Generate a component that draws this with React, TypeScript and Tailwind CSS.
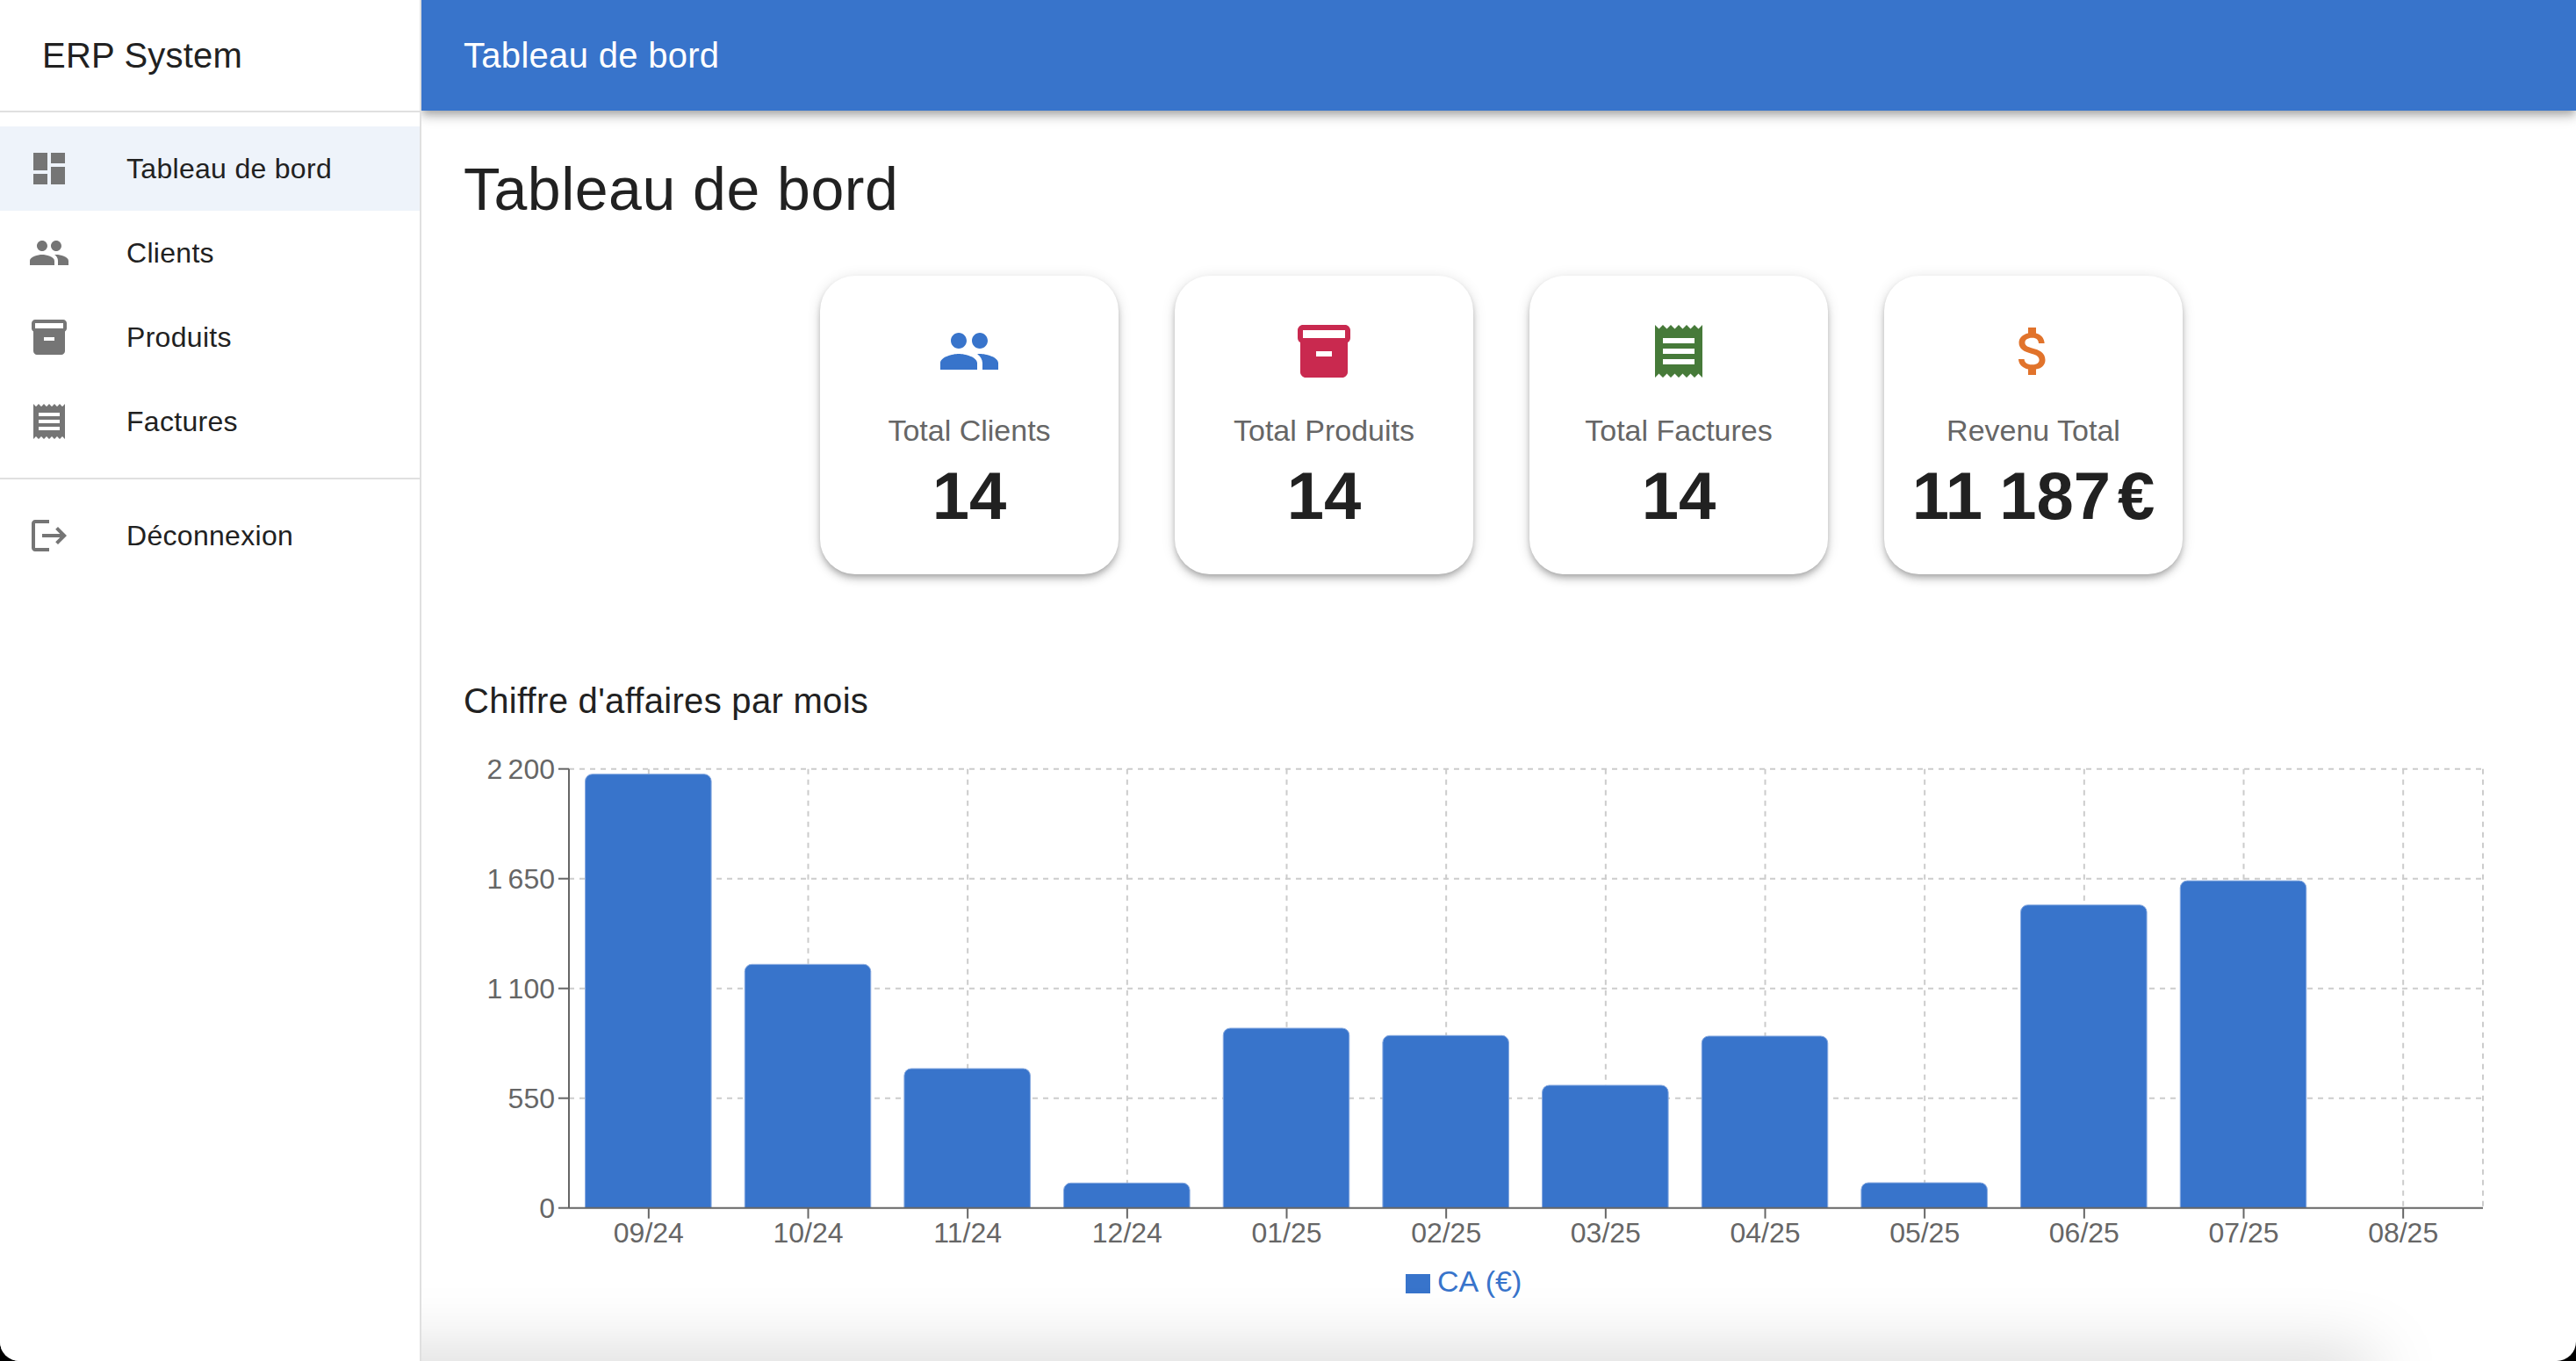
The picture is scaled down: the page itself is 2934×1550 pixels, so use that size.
import { ReactNode } from "react"

const sans = "font-['Liberation_Sans',Arial,sans-serif]"

const icons = {
  dashboard: "M3 13h8V3H3v10zm0 8h8v-6H3v6zm10 0h8V11h-8v10zm0-18v6h8V3h-8z",
  people:
    "M16 11c1.66 0 2.99-1.34 2.99-3S17.66 5 16 5c-1.66 0-3 1.34-3 3s1.34 3 3 3zm-8 0c1.66 0 2.99-1.34 2.99-3S9.66 5 8 5C6.34 5 5 6.34 5 8s1.34 3 3 3zm0 2c-2.33 0-7 1.17-7 3.5V19h14v-2.5c0-2.33-4.67-3.5-7-3.5zm8 0c-.29 0-.62.02-.97.05 1.16.84 1.97 1.97 1.97 3.45V19h6v-2.5c0-2.33-4.67-3.5-7-3.5z",
  inventory:
    "M20 2H4c-1 0-2 .9-2 2v3.01c0 .72.43 1.34 1 1.69V20c0 1.1 1.1 2 2 2h14c.9 0 2-.9 2-2V8.7c.57-.35 1-.97 1-1.69V4c0-1.1-1-2-2-2m-5 12H9v-2h6zm5-7H4V4l16-.01z",
  receipt:
    "M18 17H6v-2h12v2zm0-4H6v-2h12v2zm0-4H6V7h12v2zM3 22l1.5-1.5L6 22l1.5-1.5L9 22l1.5-1.5L12 22l1.5-1.5L15 22l1.5-1.5L18 22l1.5-1.5L21 22V2l-1.5 1.5L18 2l-1.5 1.5L15 2l-1.5 1.5L12 2l-1.5 1.5L9 2 7.5 3.5 6 2 4.5 3.5 3 2v20z",
  money:
    "M11.8 10.9c-2.27-.59-3-1.2-3-2.15 0-1.09 1.01-1.85 2.7-1.85 1.78 0 2.44.85 2.5 2.1h2.21c-.07-1.72-1.12-3.3-3.21-3.81V3h-3v2.16c-1.94.42-3.5 1.68-3.5 3.61 0 2.31 1.91 3.46 4.7 4.13 2.5.6 3 1.48 3 2.41 0 .69-.49 1.79-2.7 1.79-2.06 0-2.87-.92-2.98-2.1h-2.2c.12 2.19 1.76 3.42 3.68 3.83V21h3v-2.15c1.95-.37 3.5-1.5 3.5-3.55 0-2.84-2.43-3.81-4.7-4.4z",
  logout:
    "m17 7-1.41 1.41L18.17 11H8v2h10.17l-2.58 2.58L17 17l5-5zM4 5h8V3H4c-1.1 0-2 .9-2 2v14c0 1.1.9 2 2 2h8v-2H4z",
}

function Icon({ d, className }: { d: string; className: string }) {
  return (
    <svg viewBox="0 0 24 24" fill="currentColor" className={className}>
      <path d={d} />
    </svg>
  )
}

function NavItem({ icon, label, selected }: { icon: string; label: string; selected?: boolean }) {
  return (
    <div className={`flex h-24 items-center pl-8 ${selected ? "bg-[#eef3fa]" : ""}`}>
      <div className="w-28 shrink-0 text-[#757575]">
        <Icon d={icon} className="h-12 w-12" />
      </div>
      <span className="text-[32px] tracking-[0.3px] text-[#212121]">{label}</span>
    </div>
  )
}

function StatCard({ icon, color, label, value }: { icon: string; color: string; label: string; value: ReactNode }) {
  return (
    <div className="flex h-[340px] w-[340px] flex-col items-center rounded-[40px] bg-white pt-[50px] shadow-[0_4px_6px_-2px_rgba(0,0,0,0.2),0_6px_8px_0_rgba(0,0,0,0.14),0_2px_16px_0_rgba(0,0,0,0.12)]">
      <Icon d={icon} className={`h-[72px] w-[72px] ${color}`} />
      <div className="mt-[34px] text-[34px] leading-10 text-[#666666]">{label}</div>
      <div className="mt-[15px] whitespace-nowrap text-[76px] font-bold leading-[80px] text-[#212121]">{value}</div>
    </div>
  )
}

const ticks = [
  { label: "2\u202f200", y: 875.7 },
  { label: "1\u202f650", y: 1000.7 },
  { label: "1\u202f100", y: 1125.7 },
  { label: "550", y: 1250.7 },
  { label: "0", y: 1375.7 },
]

const bars = [
  { month: "09/24", h: 494 },
  { month: "10/24", h: 277.4 },
  { month: "11/24", h: 158.7 },
  { month: "12/24", h: 28.4 },
  { month: "01/25", h: 204.7 },
  { month: "02/25", h: 196.4 },
  { month: "03/25", h: 139.7 },
  { month: "04/25", h: 195.7 },
  { month: "05/25", h: 28.7 },
  { month: "06/25", h: 345 },
  { month: "07/25", h: 372.6 },
  { month: "08/25", h: 0 },
]

const band = 2180 / 12
const barW = 143.5
const left = 648
const right = 2828
const top = 875.7
const base = 1375.7

function barPath(cx: number, h: number) {
  const x = cx - 0.5 - barW / 2
  const r = 8
  const y = base - h
  return `M${x} ${base}V${y + r}A${r} ${r} 0 0 1 ${x + r} ${y}H${x + barW - r}A${r} ${r} 0 0 1 ${x + barW} ${y + r}V${base}Z`
}

function RevenueChart() {
  return (
    <svg viewBox="528 860 2358 640" className="block h-[640px] w-[2358px]">
      {ticks.slice(0, 4).map((t) => (
        <line key={t.y} x1={left} x2={right} y1={t.y} y2={t.y} stroke="#cccccc" strokeWidth="2" strokeDasharray="6 6" />
      ))}
      {bars.map((b, i) => (
        <line
          key={b.month}
          x1={left + band * (i + 0.5)}
          x2={left + band * (i + 0.5)}
          y1={top}
          y2={base}
          stroke="#cccccc"
          strokeWidth="2"
          strokeDasharray="6 6"
        />
      ))}
      <line x1={right} x2={right} y1={top} y2={base} stroke="#cccccc" strokeWidth="2" strokeDasharray="6 6" />

      {bars.map((b, i) =>
        b.h > 0 ? (
          <path
            key={b.month}
            d={barPath(left + band * (i + 0.5), b.h)}
            fill="#3874cb"
            stroke="#86a9e0"
            strokeWidth="1"
          />
        ) : null
      )}

      <line x1={left} x2={left} y1={top} y2={base} stroke="#666666" strokeWidth="2" />
      <line x1={left} x2={right} y1={base} y2={base} stroke="#666666" strokeWidth="2" />
      {ticks.map((t) => (
        <g key={t.label}>
          <line x1={636} x2={left} y1={t.y} y2={t.y} stroke="#666666" strokeWidth="2" />
          <text x={632} y={t.y + 11} textAnchor="end" fontSize="32" fill="#666666">
            {t.label}
          </text>
        </g>
      ))}
      {bars.map((b, i) => (
        <g key={b.month}>
          <line
            x1={left + band * (i + 0.5)}
            x2={left + band * (i + 0.5)}
            y1={base}
            y2={base + 12}
            stroke="#666666"
            strokeWidth="2"
          />
          <text x={left + band * (i + 0.5)} y={1415} textAnchor="middle" fontSize="32" fill="#666666">
            {b.month}
          </text>
        </g>
      ))}

      <rect x="1601" y="1451" width="28" height="22" fill="#3874cb" />
      <text x="1637" y="1471" fontSize="34" fill="#3874cb">
        CA (€)
      </text>
    </svg>
  )
}

export default function App() {
  return (
    <div className={`relative h-[1550px] w-[2934px] overflow-hidden bg-black ${sans}`}>
      <div className="flex h-full overflow-hidden rounded-b-[22px] bg-white">
        {/* Sidebar */}
        <aside className="relative z-10 h-full w-[480px] shrink-0 border-r-2 border-[#e0e0e0] bg-white">
          <div className="flex h-[128px] items-center border-b-2 border-[#e0e0e0] pl-12">
            <span className="text-[40px] tracking-[0.2px] text-[#212121]">ERP System</span>
          </div>
          <div className="py-4">
            <NavItem icon={icons.dashboard} label="Tableau de bord" selected />
            <NavItem icon={icons.people} label="Clients" />
            <NavItem icon={icons.inventory} label="Produits" />
            <NavItem icon={icons.receipt} label="Factures" />
          </div>
          <div className="border-t-2 border-[#e0e0e0] py-4">
            <NavItem icon={icons.logout} label="Déconnexion" />
          </div>
        </aside>

        <main className="min-w-0 flex-1">
          <header className="flex h-[126px] items-center bg-[#3874cb] pl-12 shadow-[0_4px_8px_-2px_rgba(0,0,0,0.2),0_8px_10px_0_rgba(0,0,0,0.14),0_2px_20px_0_rgba(0,0,0,0.12)]">
            <span className="text-[40px] tracking-[0.3px] text-white">Tableau de bord</span>
          </header>

          <div className="px-12 pt-[49px]">
            <h1 className="text-[68px] leading-[80px] tracking-[0.5px] text-[#212121]">Tableau de bord</h1>

            <div className="mt-[59px] flex justify-center gap-16 pl-[6px]">
              <StatCard icon={icons.people} color="text-[#3874cb]" label="Total Clients" value="14" />
              <StatCard icon={icons.inventory} color="text-[#c9294f]" label="Total Produits" value="14" />
              <StatCard icon={icons.receipt} color="text-[#467a39]" label="Total Factures" value="14" />
              <StatCard
                icon={icons.money}
                color="text-[#e1732b]"
                label="Revenu Total"
                value={
                  <>
                    {"11\u202f"}
                    <span className="ml-1">187</span>
                    <span className="ml-2">€</span>
                  </>
                }
              />
            </div>

            <h2 className="mt-[120px] text-[40px] leading-[48px] tracking-[0.3px] text-[#212121]">
              Chiffre d'affaires par mois
            </h2>
            <div className="mt-[38px]">
              <RevenueChart />
            </div>
          </div>
        </main>
      </div>

      {/* window shadow along the bottom edge */}
      <div className="pointer-events-none absolute left-[225px] right-[234px] top-[1550px] h-10 shadow-[0_0_80px_0_rgba(0,0,0,0.25)]" />
    </div>
  )
}
